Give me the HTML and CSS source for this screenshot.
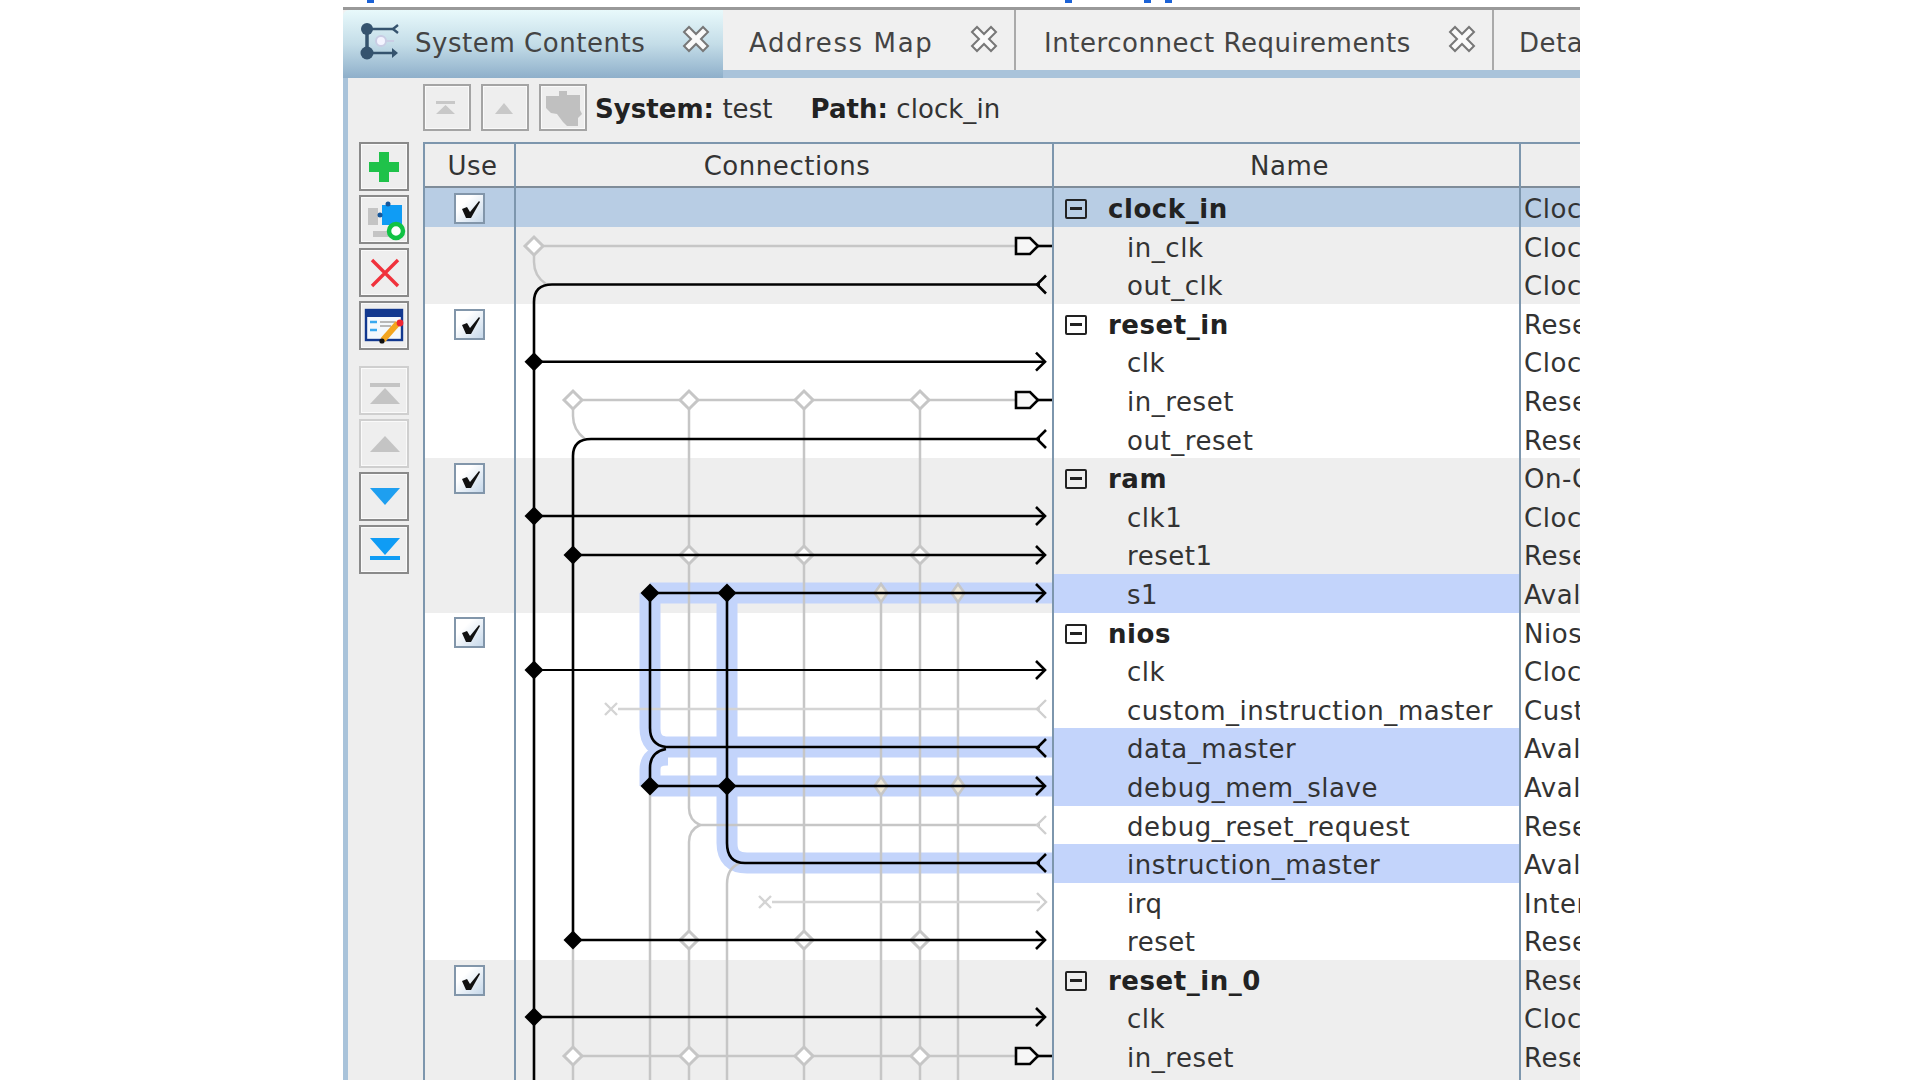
FILE: index.html
```html
<!DOCTYPE html>
<html lang="en">
<head>
    <meta charset="UTF-8">
    <title>System Contents</title>
    <link rel="stylesheet" href="styles.css">
</head>
<body>
    <!-- bits of the title above the window that stick out at the top edge -->
    <span class="speck speck-a"></span>
    <span class="speck speck-b"></span>
    <span class="speck speck-c"></span>
    <span class="speck speck-d"></span>

    <svg class="defs" width="0" height="0">
        <defs>
            <g id="tick"><path d="M6 14 L11 12 L14 17 L23 6 L24 7 L15 23 L10 23 Z" fill="#111"/></g>
            <g id="close"><path d="M-12 -7 L-7 -12 L0 -5 L7 -12 L12 -7 L5 0 L12 7 L7 12 L0 5 L-7 12 L-12 7 L-5 0 Z" fill="#fafafa" stroke="#777" stroke-width="2"/></g>
            <g id="node"><path d="M-9.5 0 L0 -9.5 L9.5 0 L0 9.5 Z" fill="#000"/></g>
            <g id="open"><path d="M-9 0 L0 -9 L9 0 L0 9 Z" fill="#fff" stroke="#c6c6c6" stroke-width="3"/></g>
            <g id="slim"><path d="M-6.5 0 L0 -9 L6.5 0 L0 9 Z" fill="#efe9da" stroke="#c6c6c6" stroke-width="2.5"/></g>
            <g id="in"><path d="M-9 -9 L0 0 L-9 9" fill="none" stroke="#000" stroke-width="2.6"/></g>
            <g id="out"><path d="M0 -9 L-9 0 L0 9" fill="none" stroke="#000" stroke-width="2.6"/></g>
            <g id="in-off"><path d="M-9 -9 L0 0 L-9 9" fill="none" stroke="#cfcfcf" stroke-width="2.4"/></g>
            <g id="out-off"><path d="M0 -9 L-9 0 L0 9" fill="none" stroke="#cfcfcf" stroke-width="2.4"/></g>
            <g id="off"><path d="M-6 -6 L6 6 M6 -6 L-6 6" fill="none" stroke="#d4d4d4" stroke-width="2.4"/></g>
            <g id="port"><path d="M-22 -8 H-8 L0 0 L-8 8 H-22 Z" fill="#f6f6f6" stroke="#000" stroke-width="2.6"/><path d="M0 0 H15" stroke="#000" stroke-width="2.6"/></g>
        </defs>
    </svg>

    <div class="window">
        <div class="tabs">
            <div class="tab tab-active">
                <svg class="tab-icon" width="40" height="40" viewBox="0 0 40 40">
                    <path d="M21 14 V26 M21 20 H34" stroke="#c9cde4" stroke-width="2" fill="none"/>
                    <circle cx="21" cy="20" r="5" fill="#f4f4ff" stroke="#c9cde4" stroke-width="2"/>
                    <path d="M7 8 V32" stroke="#35536e" stroke-width="3.5"/>
                    <path d="M7 8 H34 M7 32 H34" stroke="#35536e" stroke-width="2.6"/>
                    <path d="M38 4 L33 8 L38 12" stroke="#35536e" stroke-width="2.4" fill="none"/>
                    <path d="M32 27 L38 32 L32 37 Z" fill="#35536e"/>
                    <circle cx="7" cy="8" r="6" fill="#35536e"/>
                    <circle cx="7" cy="32" r="6.5" fill="#35536e"/>
                </svg>
                <span class="tab-label">System Contents</span>
                <svg class="tab-close" width="28" height="28" viewBox="-14 -14 28 28"><use href="#close"/></svg>
            </div>
            <div class="tab tab-address">
                <span class="tab-label">Address Map</span>
                <svg class="tab-close" width="28" height="28" viewBox="-14 -14 28 28"><use href="#close"/></svg>
            </div>
            <div class="tab tab-interconnect">
                <span class="tab-label">Interconnect Requirements</span>
                <svg class="tab-close" width="28" height="28" viewBox="-14 -14 28 28"><use href="#close"/></svg>
            </div>
            <div class="tab tab-last">
                <span class="tab-label">Details</span>
            </div>
        </div>

        <div class="panel">
            <!-- Side buttons -->
            <div class="sidebar">
                <div class="tool">
                    <svg width="46" height="45" viewBox="2 2 46 45"><path d="M20 10 H30 V20 H40 V30 H30 V40 H20 V30 H10 V20 H20 Z" fill="#1fc24a"/></svg>
                </div>
                <div class="tool">
                    <svg width="46" height="45" viewBox="2 2 46 45">
                        <rect x="9" y="13" width="10" height="17" fill="#c4c4c4"/>
                        <rect x="14" y="36" width="16" height="6" fill="#c4c4c4"/>
                        <rect x="23" y="10" width="20" height="20" fill="#0f9cf5"/>
                        <circle cx="29" cy="9" r="2.5" fill="#15569a"/>
                        <circle cx="21" cy="20" r="2.5" fill="#15569a"/>
                        <circle cx="37" cy="36" r="7" fill="#fff" stroke="#10c244" stroke-width="4.5"/>
                    </svg>
                </div>
                <div class="tool">
                    <svg width="46" height="45" viewBox="2 2 46 45"><path d="M13 12 L39 38 M39 12 L13 38" stroke="#f0323c" stroke-width="3.4"/></svg>
                </div>
                <div class="tool">
                    <svg width="46" height="45" viewBox="2 2 46 45">
                        <rect x="7" y="9" width="36" height="30" fill="#f4f8fc" stroke="#12388f" stroke-width="2.4"/>
                        <rect x="7" y="9" width="36" height="7" fill="#12388f"/>
                        <path d="M11 21 H18 M11 29 H18" stroke="#38a8ef" stroke-width="2.6"/>
                        <path d="M21 21 H36 M21 25 H32" stroke="#b8b8b8" stroke-width="2"/>
                        <path d="M24 39 L39 22" stroke="#f3a51f" stroke-width="6"/>
                        <circle cx="41" cy="22" r="3.4" fill="#ef2530"/>
                        <circle cx="23" cy="40" r="2.6" fill="#111"/>
                    </svg>
                </div>
                <div class="tool tool-off tool-gap">
                    <svg width="46" height="45" viewBox="2 2 46 45"><path d="M11 17 H41 V21 H11 Z M26 22 L41 38 H11 Z" fill="#c4c4c4"/></svg>
                </div>
                <div class="tool tool-off">
                    <svg width="46" height="45" viewBox="2 2 46 45"><path d="M26 17 L41 33 H11 Z" fill="#c4c4c4"/></svg>
                </div>
                <div class="tool">
                    <svg width="46" height="45" viewBox="2 2 46 45"><path d="M11 16 H41 L26 33 Z" fill="#1e9ff0"/></svg>
                </div>
                <div class="tool">
                    <svg width="46" height="45" viewBox="2 2 46 45"><path d="M11 13 H41 L26 30 Z M11 31 H41 V35 H11 Z" fill="#0f9cf5"/></svg>
                </div>
            </div>

            <div class="main">
                <div class="pathbar">
                    <div class="nav">
                        <svg width="44" height="43" viewBox="2 2 44 43"><path d="M13 17 H32 V20 H13 Z M22.5 21 L32 30 H13 Z" fill="#c8c8c8"/></svg>
                    </div>
                    <div class="nav">
                        <svg width="44" height="43" viewBox="2 2 44 43"><path d="M23 19 L32 30 H14 Z" fill="#c8c8c8"/></svg>
                    </div>
                    <div class="nav">
                        <svg width="44" height="43" viewBox="2 2 44 43"><path d="M7 12 H20 V7 H28 V11 H41 V26 L43 30 L39 34 V42 H28 L24 38 L18 30 L12 29 L7 24 Z" fill="#c0c0c0"/></svg>
                    </div>
                    <span class="crumb"><b>System:</b> test</span>
                    <span class="crumb crumb-path"><b>Path:</b> clock_in</span>
                </div>

                <div class="table">
                    <div class="thead">
                        <div class="th">Use</div>
                        <div class="th">Connections</div>
                        <div class="th">Name</div>
                        <div class="th"></div>
                    </div>
                    <div class="tbody">
                        <div class="row row-current">
                            <div class="cell cell-use"><span class="check"><svg width="27" height="27" viewBox="0 0 27 27"><use href="#tick"/></svg></span></div>
                            <div class="cell"></div>
                            <div class="cell cell-name parent"><span class="toggle"></span>clock_in</div>
                            <div class="cell cell-type">Clock Source</div>
                        </div>
                        <div class="row row-grey">
                            <div class="cell cell-use"></div><div class="cell"></div>
                            <div class="cell cell-name">in_clk</div>
                            <div class="cell cell-type">Clock Input</div>
                        </div>
                        <div class="row row-grey">
                            <div class="cell cell-use"></div><div class="cell"></div>
                            <div class="cell cell-name">out_clk</div>
                            <div class="cell cell-type">Clock Output</div>
                        </div>
                        <div class="row">
                            <div class="cell cell-use"><span class="check"><svg width="27" height="27" viewBox="0 0 27 27"><use href="#tick"/></svg></span></div>
                            <div class="cell"></div>
                            <div class="cell cell-name parent"><span class="toggle"></span>reset_in</div>
                            <div class="cell cell-type">Reset Bridge</div>
                        </div>
                        <div class="row">
                            <div class="cell cell-use"></div><div class="cell"></div>
                            <div class="cell cell-name">clk</div>
                            <div class="cell cell-type">Clock Input</div>
                        </div>
                        <div class="row">
                            <div class="cell cell-use"></div><div class="cell"></div>
                            <div class="cell cell-name">in_reset</div>
                            <div class="cell cell-type">Reset Input</div>
                        </div>
                        <div class="row">
                            <div class="cell cell-use"></div><div class="cell"></div>
                            <div class="cell cell-name">out_reset</div>
                            <div class="cell cell-type">Reset Output</div>
                        </div>
                        <div class="row row-grey">
                            <div class="cell cell-use"><span class="check"><svg width="27" height="27" viewBox="0 0 27 27"><use href="#tick"/></svg></span></div>
                            <div class="cell"></div>
                            <div class="cell cell-name parent"><span class="toggle"></span>ram</div>
                            <div class="cell cell-type">On-Chip Memory</div>
                        </div>
                        <div class="row row-grey">
                            <div class="cell cell-use"></div><div class="cell"></div>
                            <div class="cell cell-name">clk1</div>
                            <div class="cell cell-type">Clock Input</div>
                        </div>
                        <div class="row row-grey">
                            <div class="cell cell-use"></div><div class="cell"></div>
                            <div class="cell cell-name">reset1</div>
                            <div class="cell cell-type">Reset Input</div>
                        </div>
                        <div class="row row-grey">
                            <div class="cell cell-use"></div><div class="cell"></div>
                            <div class="cell cell-name picked">s1</div>
                            <div class="cell cell-type">Avalon Slave</div>
                        </div>
                        <div class="row">
                            <div class="cell cell-use"><span class="check"><svg width="27" height="27" viewBox="0 0 27 27"><use href="#tick"/></svg></span></div>
                            <div class="cell"></div>
                            <div class="cell cell-name parent"><span class="toggle"></span>nios</div>
                            <div class="cell cell-type">Nios II Processor</div>
                        </div>
                        <div class="row">
                            <div class="cell cell-use"></div><div class="cell"></div>
                            <div class="cell cell-name">clk</div>
                            <div class="cell cell-type">Clock Input</div>
                        </div>
                        <div class="row">
                            <div class="cell cell-use"></div><div class="cell"></div>
                            <div class="cell cell-name">custom_instruction_master</div>
                            <div class="cell cell-type">Custom Instruction</div>
                        </div>
                        <div class="row">
                            <div class="cell cell-use"></div><div class="cell"></div>
                            <div class="cell cell-name picked">data_master</div>
                            <div class="cell cell-type">Avalon Master</div>
                        </div>
                        <div class="row">
                            <div class="cell cell-use"></div><div class="cell"></div>
                            <div class="cell cell-name picked">debug_mem_slave</div>
                            <div class="cell cell-type">Avalon Slave</div>
                        </div>
                        <div class="row">
                            <div class="cell cell-use"></div><div class="cell"></div>
                            <div class="cell cell-name">debug_reset_request</div>
                            <div class="cell cell-type">Reset Output</div>
                        </div>
                        <div class="row">
                            <div class="cell cell-use"></div><div class="cell"></div>
                            <div class="cell cell-name picked">instruction_master</div>
                            <div class="cell cell-type">Avalon Master</div>
                        </div>
                        <div class="row">
                            <div class="cell cell-use"></div><div class="cell"></div>
                            <div class="cell cell-name">irq</div>
                            <div class="cell cell-type">Interrupt Receiver</div>
                        </div>
                        <div class="row">
                            <div class="cell cell-use"></div><div class="cell"></div>
                            <div class="cell cell-name">reset</div>
                            <div class="cell cell-type">Reset Input</div>
                        </div>
                        <div class="row row-grey">
                            <div class="cell cell-use"><span class="check"><svg width="27" height="27" viewBox="0 0 27 27"><use href="#tick"/></svg></span></div>
                            <div class="cell"></div>
                            <div class="cell cell-name parent"><span class="toggle"></span>reset_in_0</div>
                            <div class="cell cell-type">Reset Bridge</div>
                        </div>
                        <div class="row row-grey">
                            <div class="cell cell-use"></div><div class="cell"></div>
                            <div class="cell cell-name">clk</div>
                            <div class="cell cell-type">Clock Input</div>
                        </div>
                        <div class="row row-grey">
                            <div class="cell cell-use"></div><div class="cell"></div>
                            <div class="cell cell-name">in_reset</div>
                            <div class="cell cell-type">Reset Input</div>
                        </div>
                        <div class="row row-grey"><div class="cell cell-use"></div><div class="cell"></div><div class="cell"></div><div class="cell"></div></div>

                        <!-- Connection wires, drawn in page coordinates -->
                        <svg class="wires" width="538" height="892" viewBox="514 188 538 892">
                            <!-- selected highlight -->
                            <g fill="none" stroke="#c3d4fb" stroke-width="21">
                                <path d="M650 593 H1052"/>
                                <path d="M650 593 V728 Q650 747 668 747 H1052"/>
                                <path d="M650 786 V770 Q650 755 668 755"/>
                                <path d="M650 786 H1052"/>
                                <path d="M727 593 V843 Q727 863 747 863 H1052"/>
                            </g>

                            <!-- unused wires -->
                            <g fill="none" stroke="#c6c6c6" stroke-width="2.5">
                                <path d="M534 246 V262 Q534 276 546 284"/>
                                <path d="M534 246 H1016"/>
                                <path d="M573 400 V416 Q573 430 585 439"/>
                                <path d="M573 400 H1016"/>
                                <path d="M689 400 V808 Q689 820 700 825 Q689 830 689 842 V1080"/>
                                <path d="M804 400 V1080"/>
                                <path d="M920 400 V1080"/>
                                <path d="M881 593 V1080"/>
                                <path d="M958 593 V1080"/>
                                <path d="M650 786 V1080"/>
                                <path d="M740 863 Q727 868 727 884 V1080"/>
                                <path d="M573 940 V1080"/>
                                <path d="M573 1056 H1016"/>
                                <path d="M618 709 H1040" stroke="#d4d4d4"/>
                                <path d="M700 825 H1040"/>
                                <path d="M772 902 H1040" stroke="#d4d4d4"/>
                            </g>
                            <use href="#open" x="534" y="246"/>
                            <use href="#open" x="573" y="400"/>
                            <use href="#open" x="689" y="400"/>
                            <use href="#open" x="804" y="400"/>
                            <use href="#open" x="920" y="400"/>
                            <use href="#open" x="689" y="555"/>
                            <use href="#open" x="804" y="555"/>
                            <use href="#open" x="920" y="555"/>
                            <use href="#open" x="689" y="940"/>
                            <use href="#open" x="804" y="940"/>
                            <use href="#open" x="920" y="940"/>
                            <use href="#open" x="573" y="1056"/>
                            <use href="#open" x="689" y="1056"/>
                            <use href="#open" x="804" y="1056"/>
                            <use href="#open" x="920" y="1056"/>
                            <use href="#slim" x="881" y="593"/>
                            <use href="#slim" x="958" y="593"/>
                            <use href="#slim" x="881" y="786"/>
                            <use href="#slim" x="958" y="786"/>
                            <use href="#off" x="611" y="709"/>
                            <use href="#off" x="765" y="902"/>
                            <use href="#out-off" x="1046" y="709"/>
                            <use href="#out-off" x="1046" y="825"/>
                            <use href="#in-off" x="1046" y="902"/>

                            <!-- live wires -->
                            <g fill="none" stroke="#000" stroke-width="2.6">
                                <path d="M1040 284.5 H552 Q534 284.5 534 302 V1080"/>
                                <path d="M534 361.7 H1044"/>
                                <path d="M1040 439 H591 Q573 439 573 456 V940"/>
                                <path d="M534 516 H1044"/>
                                <path d="M573 555 H1044"/>
                                <path d="M650 593 H1044"/>
                                <path d="M534 670 H1044" stroke-width="2"/>
                                <path d="M650 593 V728 Q650 745 666 747 H1040"/>
                                <path d="M666 749 Q650 752 650 768 V786"/>
                                <path d="M650 786 H1044"/>
                                <path d="M727 593 V843 Q727 863 745 863 H1040"/>
                                <path d="M573 940 H1044"/>
                                <path d="M534 1017 H1044"/>
                            </g>
                            <use href="#out" x="1046" y="284.5"/>
                            <use href="#out" x="1046" y="439"/>
                            <use href="#out" x="1046" y="748"/>
                            <use href="#out" x="1046" y="863"/>
                            <use href="#in" x="1045" y="361.7"/>
                            <use href="#in" x="1045" y="516"/>
                            <use href="#in" x="1045" y="555"/>
                            <use href="#in" x="1045" y="593"/>
                            <use href="#in" x="1045" y="670"/>
                            <use href="#in" x="1045" y="786"/>
                            <use href="#in" x="1045" y="940"/>
                            <use href="#in" x="1045" y="1017"/>
                            <use href="#port" x="1038" y="246"/>
                            <use href="#port" x="1038" y="400"/>
                            <use href="#port" x="1038" y="1056"/>
                            <use href="#node" x="534" y="361.7"/>
                            <use href="#node" x="534" y="516"/>
                            <use href="#node" x="573" y="555"/>
                            <use href="#node" x="650" y="593"/>
                            <use href="#node" x="727" y="593"/>
                            <use href="#node" x="534" y="670"/>
                            <use href="#node" x="650" y="786"/>
                            <use href="#node" x="727" y="786"/>
                            <use href="#node" x="573" y="940"/>
                            <use href="#node" x="534" y="1017"/>
                        </svg>
                    </div>
                </div>
            </div>
        </div>
    </div>
</body>
</html>
```

FILE: styles.css
```css
html, body {
    margin: 0;
    height: 1080px;
    background: #fff;
    overflow: hidden;
}
body {
    font-family: "DejaVu Sans", sans-serif;
    font-size: 26px;
    letter-spacing: 0.55px;
    color: #333;
}
.defs {
    position: absolute;
}
.speck {
    position: absolute;
    top: 0;
    width: 7px;
    height: 3px;
    background: #1b62d6;
}
.speck-a { left: 367px; }
.speck-b { left: 1065px; }
.speck-c { left: 1144px; }
.speck-d { left: 1165px; }

.window {
    box-sizing: border-box;
    width: 1237px;
    height: 1073px;
    margin: 7px 0 0 343px;
    border-top: 3px solid #999;
    overflow: hidden;
    display: flex;
    flex-direction: column;
}

/* Tabs */
.tabs {
    display: flex;
    height: 68px;
    flex: none;
    box-sizing: border-box;
    border-bottom: 8px solid #a9c3da;
    background: #f0f0f0;
    white-space: nowrap;
}
.tab {
    box-sizing: border-box;
    display: flex;
    align-items: center;
    flex: none;
    height: 60px;
    padding-top: 6px;
    border-right: 2px solid #aaa;
}
.tab-label {
    color: #444;
}
.tab-close {
    flex: none;
    margin: -8px 0 0 37px;
}
.tab-active {
    width: 380px;
    height: 68px;
    padding: 0 0 2px 17px;
    border-right: 0;
    border-radius: 6px 0 0 0;
    background: linear-gradient(#e8f9fb, #c4dde8 50%, #8eafca);
}
.tab-icon {
    margin: -4px 15px 0 0;
}
.tab-address {
    width: 293px;
    padding-left: 26px;
}
.tab-address .tab-label {
    letter-spacing: 1.6px;
}
.tab-interconnect {
    width: 478px;
    padding-left: 28px;
}
.tab-last {
    padding-left: 25px;
    border-right: 0;
}

/* Panel below the tabs */
.panel {
    flex: 1;
    min-height: 0;
    display: flex;
    background: #eee;
    border-left: 5px solid #a9c3da;
}
.sidebar {
    box-sizing: border-box;
    width: 75px;
    flex: none;
    padding: 64px 0 0 11px;
    display: flex;
    flex-direction: column;
    gap: 4px;
}
.tool {
    box-sizing: border-box;
    width: 50px;
    height: 49px;
    flex: none;
    border: 2px solid #8a8a8a;
    box-shadow: inset 0 0 0 1px #fafafa;
}
.tool svg, .nav svg {
    display: block;
}
.tool-off {
    border-color: #cfcfcf;
}
.tool-gap {
    margin-top: 12px;
}

.main {
    flex: 1;
    min-width: 0;
    display: flex;
    flex-direction: column;
}
.pathbar {
    display: flex;
    align-items: center;
    gap: 10px;
    height: 47px;
    margin: 6px 0 11px;
    flex: none;
    white-space: nowrap;
}
.nav {
    box-sizing: border-box;
    width: 48px;
    height: 47px;
    flex: none;
    border: 2px solid #a4a4a4;
    box-shadow: inset 0 0 0 1px #fafafa;
}
.crumb {
    margin: 2px 0 0 -2px;
    letter-spacing: 0.05px;
}
.crumb b {
    color: #222;
}
.crumb-path {
    margin-left: 28px;
}

/* Table */
.table {
    flex: 1;
    min-height: 0;
    border-top: 2px solid #7d96ad;
}
.thead, .row {
    display: grid;
    grid-template-columns: 91px 538px 467px 1fr;
}
.thead {
    height: 44px;
    box-sizing: border-box;
    border-bottom: 2px solid #7f8c99;
}
.th {
    box-sizing: border-box;
    padding-left: 6px;
    border-left: 2px solid #7d96ad;
    text-align: center;
    line-height: 44px;
}
.tbody {
    position: relative;
}
.row {
    height: 38.6px;
    background: #fff;
}
.row-grey {
    background: #eee;
}
.row-current {
    background: #b8cde4;
}
.cell {
    box-sizing: border-box;
    min-width: 0;
    padding-top: 2px;
    border-left: 2px solid #7d96ad;
    line-height: 38px;
    white-space: nowrap;
    overflow: hidden;
}
.cell-use {
    display: flex;
    align-items: center;
    justify-content: center;
    padding: 2px 1px 0 0;
}
.check {
    box-sizing: border-box;
    width: 31px;
    height: 31px;
    border: 2px solid #8296aa;
    background: linear-gradient(135deg, #fff 30%, #c6d8ea);
}
.check svg {
    display: block;
}
.cell-name {
    padding-left: 73px;
}
.parent {
    display: flex;
    align-items: center;
    padding-top: 4px;
    padding-left: 11px;
    font-weight: bold;
    color: #222;
}
.toggle {
    box-sizing: border-box;
    position: relative;
    width: 22px;
    height: 20px;
    margin-right: 21px;
    flex: none;
    border: 2.5px solid #222;
    border-radius: 2px;
}
.toggle::before {
    content: "";
    position: absolute;
    left: 3px;
    right: 3px;
    top: 6px;
    height: 3px;
    background: #222;
}
.picked {
    background: #c3d4fb;
}
.cell-type {
    padding-left: 3px;
}
.wires {
    position: absolute;
    left: 91px;
    top: 0;
}
```
